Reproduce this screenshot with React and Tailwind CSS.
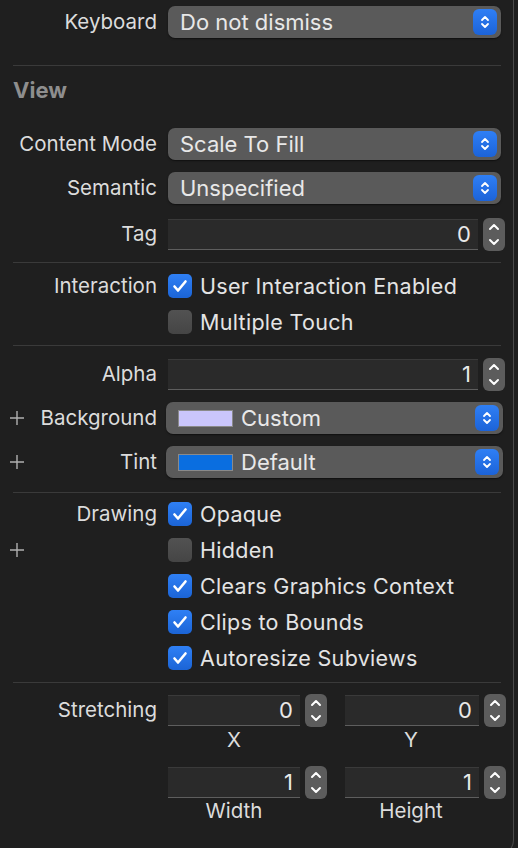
import React from 'react';

const FONT = { fontFamily: 'Inter, "Noto Sans", sans-serif' };

function PopupArrows() {
  return (
    <div className="flex h-[26px] w-[24px] shrink-0 items-center justify-center rounded-[6px] bg-gradient-to-b from-[#2f7ff5] to-[#1c63d8]">
      <svg width="10" height="16" viewBox="0 0 10 16" fill="none" stroke="white" strokeWidth="1.8" strokeLinecap="round" strokeLinejoin="round">
        <path d="M2 6 L5 3 L8 6" />
        <path d="M2 10 L5 13 L8 10" />
      </svg>
    </div>
  );
}

function Popup({ value, swatch, wide }) {
  return (
    <div className={`flex h-[32px] items-center rounded-[7px] bg-[#5a5a5a] pr-[4px] shadow-[0_1px_1.5px_rgba(0,0,0,0.5)] ${wide ? 'w-[337px] pl-[12px]' : 'w-[333px] pl-[12px]'}`}>
      {swatch && (
        <div className={`mr-[8px] h-[17px] w-[55px] shrink-0 border border-[#8a8a8a] ${swatch}`} />
      )}
      <span className="flex-1 text-[22px] leading-none whitespace-nowrap text-[#e8e8e8]">{value}</span>
      <PopupArrows />
    </div>
  );
}

function Stepper() {
  return (
    <div className="flex h-[33px] w-[22px] shrink-0 flex-col items-center justify-between rounded-[6px] bg-[#5c5c5c] py-[5px]">
      <svg width="12" height="8" viewBox="0 0 12 8" fill="none" stroke="white" strokeWidth="2" strokeLinecap="round" strokeLinejoin="round">
        <path d="M2 6 L6 2 L10 6" />
      </svg>
      <svg width="12" height="8" viewBox="0 0 12 8" fill="none" stroke="white" strokeWidth="2" strokeLinecap="round" strokeLinejoin="round">
        <path d="M2 2 L6 6 L10 2" />
      </svg>
    </div>
  );
}

function Field({ value, width }) {
  return (
    <div className="flex items-center">
      <div className={`flex h-[31px] items-center justify-end border-t border-t-[#3a3a3a] border-b border-b-[#5e5e5e] bg-[#2a2a2a] pr-[7px] text-[22px] leading-none text-[#e8e8e8] ${width}`}>
        {value}
      </div>
      <div className="ml-[5px]">
        <Stepper />
      </div>
    </div>
  );
}

function Checkbox({ checked }) {
  if (!checked) {
    return <div className="h-[24px] w-[24px] shrink-0 rounded-[5px] bg-gradient-to-b from-[#525252] to-[#454545]" />;
  }
  return (
    <div className="flex h-[24px] w-[24px] shrink-0 items-center justify-center rounded-[5px] bg-gradient-to-b from-[#2f80f5] to-[#1b64d6]">
      <svg width="16" height="14" viewBox="0 0 16 14" fill="none" stroke="white" strokeWidth="2.6" strokeLinecap="round" strokeLinejoin="round">
        <path d="M2.5 7.5 L6 11.5 L13.5 2.5" />
      </svg>
    </div>
  );
}

function Plus() {
  return (
    <svg width="14" height="14" viewBox="0 0 14 14" stroke="#b0b0b0" strokeWidth="1.4" className="shrink-0">
      <path d="M7 0 V14 M0 7 H14" />
    </svg>
  );
}

function Label({ children, plus }) {
  return (
    <div className="flex w-[157px] shrink-0 items-center justify-between pl-[10px]">
      {plus ? <Plus /> : <span />}
      <span className="text-right text-[20.5px] leading-none whitespace-nowrap text-[#dcdcdc]">{children}</span>
    </div>
  );
}

function Sep({ mt }) {
  return <div className={`mr-[12px] ml-[13px] h-px bg-[#3a3a3a] ${mt}`} />;
}

function CheckRow({ label, text, checked, plus, mt }) {
  return (
    <div className={`flex h-[24px] items-center ${mt}`}>
      <Label plus={plus}>{label}</Label>
      <div className="ml-[11px] flex items-center">
        <Checkbox checked={checked} />
        <span className="ml-[8px] pt-px text-[21.5px] leading-none tracking-[0.3px] whitespace-nowrap text-[#e4e4e4]">{text}</span>
      </div>
    </div>
  );
}

export default function App() {
  return (
    <div className="h-[848px] w-[518px] overflow-hidden bg-[#1e1e1e]" style={FONT}>
      <div className="h-[856px] w-[514px] rounded-br-[16px] border-r border-b border-[#4a4a4a] bg-[#1f1f1f] pt-[6px]">
        <div className="flex h-[32px] items-center">
          <Label>Keyboard</Label>
          <div className="ml-[11px]"><Popup value="Do not dismiss" /></div>
        </div>

        <Sep mt="mt-[27px]" />

        <div className="mt-[13px] h-[22px] pl-[13px] text-[22px] leading-[22px] font-bold text-[#8e8e8e]">View</div>

        <div className="mt-[27px] flex h-[32px] items-center">
          <Label>Content Mode</Label>
          <div className="ml-[11px]"><Popup value="Scale To Fill" /></div>
        </div>
        <div className="mt-[12px] flex h-[32px] items-center">
          <Label>Semantic</Label>
          <div className="ml-[11px]"><Popup value="Unspecified" /></div>
        </div>
        <div className="mt-[13px] flex h-[34px] items-center">
          <Label>Tag</Label>
          <div className="ml-[11px]"><Field value="0" width="w-[310px]" /></div>
        </div>

        <Sep mt="mt-[11px]" />

        <CheckRow label="Interaction" text="User Interaction Enabled" checked mt="mt-[11px]" />
        <CheckRow label="" text="Multiple Touch" mt="mt-[12px]" />

        <Sep mt="mt-[11px]" />

        <div className="mt-[11px] flex h-[34px] items-center">
          <Label>Alpha</Label>
          <div className="ml-[11px]"><Field value="1" width="w-[310px]" /></div>
        </div>
        <div className="mt-[11px] flex h-[32px] items-center">
          <Label plus>Background</Label>
          <div className="ml-[9px]"><Popup value="Custom" swatch="bg-[#cac6fc]" wide /></div>
        </div>
        <div className="mt-[12px] flex h-[32px] items-center">
          <Label plus>Tint</Label>
          <div className="ml-[9px]"><Popup value="Default" swatch="bg-[#0a6ee0]" wide /></div>
        </div>

        <Sep mt="mt-[14px]" />

        <CheckRow label="Drawing" text="Opaque" checked mt="mt-[9px]" />
        <CheckRow label="" text="Hidden" plus mt="mt-[12px]" />
        <CheckRow label="" text="Clears Graphics Context" checked mt="mt-[12px]" />
        <CheckRow label="" text="Clips to Bounds" checked mt="mt-[12px]" />
        <CheckRow label="" text="Autoresize Subviews" checked mt="mt-[12px]" />

        <Sep mt="mt-[12px]" />

        <div className="mt-[10px] flex h-[34px] items-center">
          <Label>Stretching</Label>
          <div className="ml-[11px] flex gap-[18px]">
            <Field value="0" width="w-[132px]" />
            <Field value="0" width="w-[134px]" />
          </div>
        </div>
        <div className="mt-[3px] flex h-[20px] items-center text-[20.5px] leading-none text-[#dcdcdc]">
          <div className="ml-[168px] w-[132px] text-center">X</div>
          <div className="ml-[44px] w-[134px] text-center">Y</div>
        </div>

        <div className="mt-[15px] flex h-[34px] items-center">
          <Label></Label>
          <div className="ml-[11px] flex gap-[18px]">
            <Field value="1" width="w-[132px]" />
            <Field value="1" width="w-[134px]" />
          </div>
        </div>
        <div className="mt-[2px] flex h-[20px] items-center text-[20.5px] leading-none text-[#dcdcdc]">
          <div className="ml-[168px] w-[132px] text-center">Width</div>
          <div className="ml-[44px] w-[134px] text-center">Height</div>
        </div>
      </div>
    </div>
  );
}
